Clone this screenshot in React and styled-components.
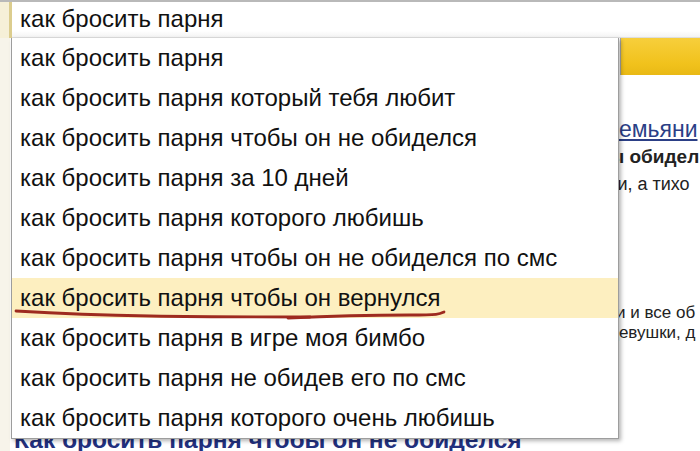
import React from "react";
import styled, { createGlobalStyle } from "styled-components";

const Global = createGlobalStyle`
  html, body {
    margin: 0;
    padding: 0;
    background: #fff;
    width: 700px;
    height: 451px;
    overflow: hidden;
  }
  body {
    font-family: "Liberation Sans", Arial, sans-serif;
  }
`;

const Page = styled.div`
  position: relative;
  width: 700px;
  height: 451px;
  overflow: hidden;
  background: #fff;
`;

const SearchBar = styled.div`
  height: 36px;
  border-top: 2px solid #b9b9b9;
  display: flex;
  background: linear-gradient(#fff 80%, #f2f2f2);
  box-shadow: inset 0 -1px 0 #dedede;
`;

const Strip = styled.div`
  width: 9px;
  background: #f6f0d8;
  border-right: 3px solid #dccd8e;
`;

const Query = styled.div`
  padding-left: 8px;
  font-size: 24px;
  line-height: 34px;
  color: #111;
`;

const Body = styled.div`
  display: grid;
  grid-template-columns: 611px 1fr;
  height: 413px;
`;

const MainCol = styled.div`
  display: flex;
  flex-direction: column;
  border-left: 10px solid #f7f4ea;
`;

const SideCol = styled.div`
  display: flex;
  flex-direction: column;
  overflow: hidden;
  white-space: nowrap;
  color: #222;
`;

const FindButton = styled.div`
  margin-left: 9px;
  height: 37px;
  background: linear-gradient(#f7cf3c, #f1c21c 70%, #e9b915);
  border-left: 1px solid #a9a9a9;
`;

const SideLine = styled.div`
  margin-top: ${(p) => p.$top || 0}px;
  text-indent: ${(p) => p.$indent || 0}px;
  line-height: ${(p) => p.$lh}px;
  font-size: ${(p) => p.$size}px;
  font-weight: ${(p) => (p.$bold ? 700 : 400)};
  color: ${(p) => (p.$link ? "#2b3f86" : "#222")};
  text-decoration: ${(p) => (p.$link ? "underline" : "none")};
`;

const BottomLink = styled.div`
  margin-top: auto;
  padding-left: 4px;
  font-size: 24.5px;
  font-weight: 700;
  color: #22307e;
  line-height: 24px;
  margin-bottom: -1px;
  white-space: nowrap;
`;

const Suggest = styled.ul`
  position: absolute;
  left: 11px;
  top: 38px;
  width: 606px;
  margin: 0;
  padding: 0;
  list-style: none;
  background: #fff;
  border: 1px solid #9d9d9d;
  border-top: none;
  box-shadow: 2px 2px 4px rgba(0, 0, 0, 0.3);
`;

const Item = styled.li`
  position: relative;
  height: 40px;
  line-height: 39px;
  padding-left: 8px;
  font-size: 24px;
  color: #111;
  white-space: nowrap;
  background: ${(p) => (p.$active ? "#fdefc0" : "transparent")};
`;

const Scribble = styled.svg`
  position: absolute;
  left: -2px;
  top: 32px;
  overflow: visible;
`;

const items = [
  "как бросить парня",
  "как бросить парня который тебя любит",
  "как бросить парня чтобы он не обиделся",
  "как бросить парня за 10 дней",
  "как бросить парня которого любишь",
  "как бросить парня чтобы он не обиделся по смс",
  "как бросить парня чтобы он вернулся",
  "как бросить парня в игре моя бимбо",
  "как бросить парня не обидев его по смс",
  "как бросить парня которого очень любишь",
];

export default function App() {
  return (
    <Page>
      <Global />
      <SearchBar>
        <Strip />
        <Query>как бросить парня</Query>
      </SearchBar>
      <Body>
        <MainCol>
          <BottomLink>Как бросить парня чтобы он не обиделся</BottomLink>
        </MainCol>
        <SideCol>
          <FindButton />
          <SideLine $top={40} $size={23} $lh={28} $indent={-6} $link>
            Земьяни
          </SideLine>
          <SideLine $size={19} $lh={28} $indent={-3} $bold>
            ы обидел
          </SideLine>
          <SideLine $size={18} $lh={26} $indent={-6}>
            ми, а тихо
          </SideLine>
          <SideLine $top={106} $size={17} $lh={20} $indent={5}>
            и и все об
          </SideLine>
          <SideLine $size={17} $lh={20} $indent={-2}>
            девушки, д
          </SideLine>
        </SideCol>
      </Body>
      <Suggest>
        {items.map((text, i) => (
          <Item key={i} $active={i === 6}>
            {text}
            {i === 6 && (
              <Scribble width="440" height="12">
                <path
                  d="M6 1 C 40 3, 80 5, 140 6 S 260 7, 300 7"
                  fill="none"
                  stroke="#9e2a1f"
                  strokeWidth="2.8"
                  strokeLinecap="round"
                />
                <path
                  d="M278 8 C 320 6, 370 5, 400 5 S 430 4, 434 2"
                  fill="none"
                  stroke="#9e2a1f"
                  strokeWidth="2.8"
                  strokeLinecap="round"
                />
              </Scribble>
            )}
          </Item>
        ))}
      </Suggest>
    </Page>
  );
}
